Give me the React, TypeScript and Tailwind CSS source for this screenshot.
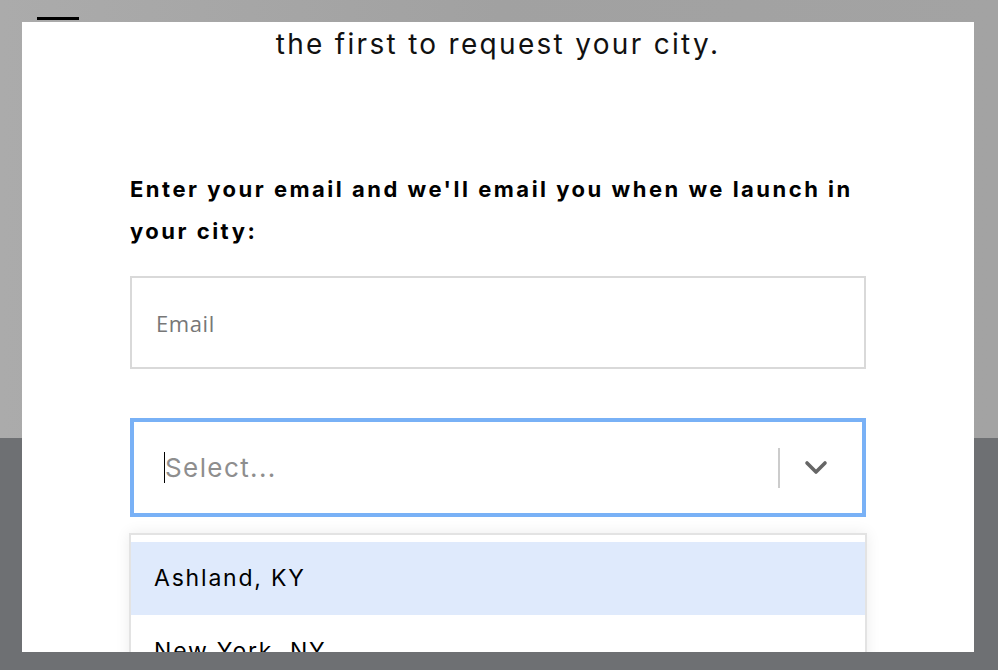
import React from 'react';

const cities = ['Ashland, KY', 'New York, NY'];

export default function App() {
  return (
    <div className="relative h-[670px] w-[998px] overflow-hidden font-['Inter',sans-serif]">
      {/* page behind the overlay */}
      <div className="flex h-full flex-col">
        <div className="h-[438px] bg-gradient-to-r from-[#ababab] via-[#a1a1a1] to-[#a3a3a3] px-[37px] pt-[17px]">
          <div className="flex w-[42px] flex-col gap-[9px]">
            <span className="h-[3px] bg-black" />
            <span className="h-[3px] bg-black" />
            <span className="h-[3px] bg-black" />
          </div>
        </div>
        <div className="flex-1 bg-[#6e7073]" />
      </div>

      {/* modal */}
      <div className="absolute left-[22px] top-[22px] h-[630px] w-[952px] overflow-hidden bg-white px-[108px]">
        <p className="mt-[2px] text-center text-[28px] leading-[40px] tracking-[2.3px] text-[#111]">
          the first to request your city.
        </p>

        <p className="mt-[104px] text-[22px] font-bold leading-[42px] tracking-[2.5px] text-black">
          Enter your email and we'll email you when we launch in your city:
        </p>

        <input
          type="email"
          placeholder="Email"
          className="mt-[24px] h-[93px] w-full border-2 border-[#d9d9d9] px-[24px] font-['Open_Sans',sans-serif] text-[22px] tracking-[0.6px] text-black outline-none placeholder:text-[#777]"
        />

        <div className="mt-[49px] flex h-[99px] items-center border-4 border-[#79b1f6]">
          <div className="flex flex-1 items-center pl-[30px]">
            <span className="h-[31px] w-px bg-black" />
            <span className="text-[26px] tracking-[1.4px] text-[#8e8e8e]">Select...</span>
          </div>
          <span className="h-[40px] w-[2px] bg-[#cccccc]" />
          <div className="flex w-[82px] items-center justify-center pr-[10px]">
            <svg width="24" height="16" viewBox="0 0 24 16" fill="none">
              <path d="M3 3l9 9 9-9" stroke="#666" strokeWidth="3.6" strokeLinecap="round" strokeLinejoin="round" />
            </svg>
          </div>
        </div>

        <div className="-mx-px mt-[16px] border-2 border-[#e3e3e3] pt-[7px] shadow-[0_0_14px_rgba(0,0,0,0.08)]">
          {cities.map((c, i) => (
            <div
              key={c}
              className={`flex h-[73px] items-center pl-[23px] text-[23px] tracking-[1.8px] text-black ${i === 0 ? 'bg-[#dfeafc]' : 'bg-white'}`}
            >
              {c}
            </div>
          ))}
        </div>
      </div>
    </div>
  );
}
